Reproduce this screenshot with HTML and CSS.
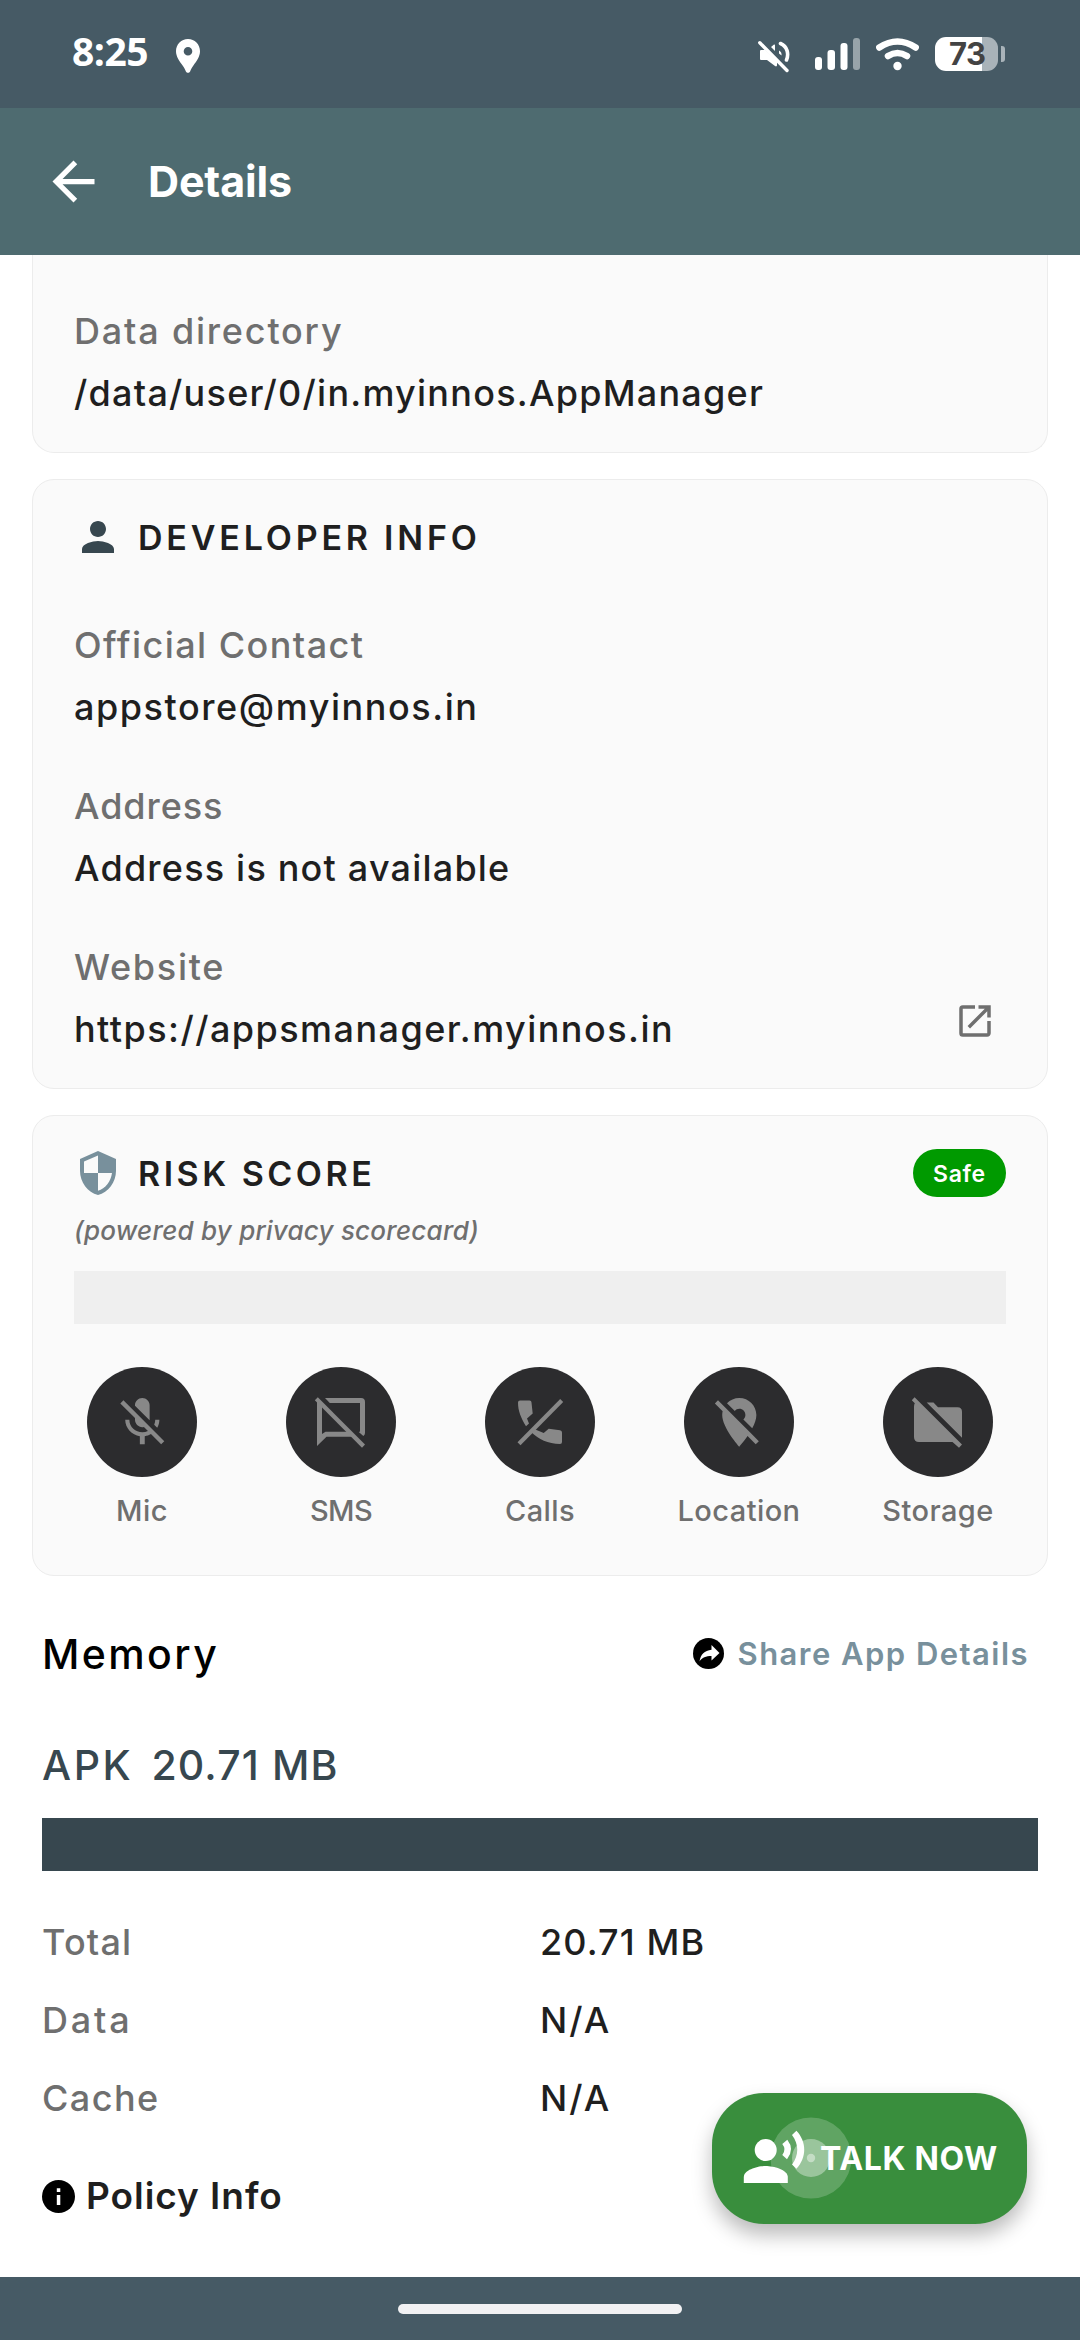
FILE: index.html
```
<!DOCTYPE html>
<html lang="en">
<head>
<meta charset="utf-8">
<title>Details</title>
<link rel="stylesheet" href="styles.css">
</head>
<body>
<div class="screen">
  <div class="status">
    <span class="clock">8:25</span>
    <svg class="pin" width="24" height="34" viewBox="0 0 24 34"><path fill="#fff" fill-rule="evenodd" d="M12 0C5.300 0 0 5.300 0 12.200c0 5.300 3.400 9.800 6.600 14.300 1.500 2.200 2.500 4 3.300 5.900.8 1.800 3.400 1.800 4.200 0 .8-1.900 1.800-3.700 3.300-5.900C20.600 22 24 17.500 24 12.200 24 5.300 18.700 0 12 0zm0 8a4.300 4.300 0 1 1 0 8.600A4.300 4.300 0 0 1 12 8z"/></svg>
    <div class="indicators">
      <svg width="33" height="36" viewBox="0 0 33 36" fill="#fff"><path d="M4 13h4L20 24.500V28c0 1.500-1 1.800-2 1L10 23H4q-1 0-1-1v-8q0-1 1-1z"/><path d="M14 10l3-2.500q1-.5 1 1v5.500zM22 13.500q3 1.500 2.500 5l-2.500-2z"/><path d="M23.500 6.500C30.500 9.500 32 17 29.500 23" fill="none" stroke="#fff" stroke-width="3.600" stroke-linecap="round"/><path d="M2.800 5.800L30 33.500" stroke="#fff" stroke-width="3.400" stroke-linecap="round"/></svg>
      <svg class="signal" width="45" height="36" viewBox="0 0 45 36" fill="#fff"><rect x="0" y="20" width="7" height="13" rx="3"/><rect x="12.500" y="13" width="7.500" height="20" rx="3"/><rect x="25.500" y="6" width="7" height="27" rx="3"/><rect x="38" y="1" width="7" height="32" rx="3" fill="#98a4aa"/></svg>
      <svg class="wifi" width="43" height="36" viewBox="0 0 43 36" fill="none" stroke="#fff" stroke-width="6.500" stroke-linecap="round"><path d="M3.300 10.500Q21.500-1.500 39.700 10.500"/><path d="M12 19Q21.500 13 31 19"/><circle cx="21.500" cy="29" r="4.200" fill="#fff" stroke="none"/></svg>
      <div class="battery"><span class="charge">73</span><span class="nub"></span></div>
    </div>
  </div>

  <div class="appbar">
    <svg width="63" height="63" viewBox="0 0 24 24" fill="#fff"><path d="M20 11H7.830l5.590-5.590L12 4l-8 8 8 8 1.410-1.410L7.830 13H20v-2z"/></svg>
    <span class="title">Details</span>
  </div>

  <div class="content">
    <div class="card card-top">
      <div class="label w-dir">Data directory</div>
      <div class="value w-path">/data/user/0/in.myinnos.AppManager</div>
    </div>

    <div class="card">
      <div class="head">
        <svg width="48" height="48" viewBox="0 0 24 24" fill="#37474f"><path d="M12 12c2.210 0 4-1.790 4-4s-1.790-4-4-4-4 1.790-4 4 1.790 4 4 4zm0 2c-2.670 0-8 1.340-8 4v2h16v-2c0-2.660-5.330-4-8-4z"/></svg>
        <span class="heading w-dev">DEVELOPER INFO</span>
      </div>
      <div class="fields">
        <div class="field"><div class="label">Official Contact</div><div class="value w-mail">appstore@myinnos.in</div></div>
        <div class="field"><div class="label w-addr">Address</div><div class="value w-none">Address is not available</div></div>
        <div class="row">
          <div class="field"><div class="label w-site">Website</div><div class="value w-url">https://appsmanager.myinnos.in</div></div>
          <svg class="open" width="42" height="42" viewBox="0 0 24 24" fill="#6f6f6f"><path d="M19 19H5V5h7V3H5a2 2 0 0 0-2 2v14a2 2 0 0 0 2 2h14c1.100 0 2-.9 2-2v-7h-2v7zM14 3v2h3.590l-9.830 9.830 1.410 1.410L19 6.410V10h2V3h-7z"/></svg>
        </div>
      </div>
    </div>

    <div class="card card-risk">
      <div class="head">
        <svg width="48" height="48" viewBox="0 0 24 24" fill="#78909c"><path d="M12 1L3 5v6c0 5.550 3.840 10.740 9 12 5.160-1.260 9-6.450 9-12V5l-9-4zm0 10.990h7c-.53 4.120-3.280 7.790-7 8.940V12H5V6.300l7-3.110v8.800z"/></svg>
        <span class="heading w-risk">RISK SCORE</span>
        <span class="badge">Safe</span>
      </div>
      <div class="powered">(powered by privacy scorecard)</div>
      <div class="meter"></div>
      <div class="perms">
        <div class="perm"><div class="disc"><svg width="58.600" height="58.600" viewBox="0 0 24 24"><path d="M19 11h-1.700c0 .74-.16 1.430-.43 2.050l1.230 1.230c.56-.98.9-2.090.9-3.280zm-4.020.17c0-.06.02-.11.02-.17V5c0-1.660-1.340-3-3-3S9 3.340 9 5v.18l5.980 5.990zM4.270 3L3 4.270l6.010 6.010V11c0 1.660 1.330 3 2.990 3 .22 0 .44-.03.65-.08l1.660 1.660c-.71.33-1.500.52-2.310.52-2.760 0-5.300-2.100-5.300-5.100H5c0 3.410 2.720 6.230 6 6.720V21h2v-3.280c.91-.13 1.770-.45 2.540-.9L19.730 21 21 19.730 4.270 3z"/></svg></div><span>Mic</span></div>
        <div class="perm"><div class="disc"><svg width="110" height="110" viewBox="0 0 110 110"><path d="M31 33l5 5v29l3.500-2.200H64l5.500 4.900h-29L31 79z"/><path d="M39 31h36q4 0 4 4v31q0 2-1.700 3L72.800 65l1.200-.6V36H43.800z"/><path d="M28.800 33.200l3-3L79 77.500l-3 3.200z"/></svg></div><span class="w-sms">SMS</span></div>
        <div class="perm"><div class="disc"><svg width="110" height="110" viewBox="0 0 110 110"><path d="M35 33.500h9.500q2 0 2 2l1.200 11-5.700 5 2 5-3 2.800C36 51 33 44 33 35.500q0-2 2-2z"/><path d="M47.500 64.700l2.800-2.200 8.400 3.500 5-4.300 11.300 1.600q2 .3 2 2.300V75q0 2-2 2C63 77 53.500 72 46.500 65.500z"/><path d="M32.500 75.200L75.200 32l3 3L35.500 78.200z"/></svg></div><span>Calls</span></div>
        <div class="perm"><div class="disc"><svg width="58.600" height="58.600" viewBox="0 0 24 24"><path d="M12 6.500c1.380 0 2.500 1.120 2.500 2.500 0 .74-.33 1.390-.83 1.850l3.630 3.630c.98-1.860 1.700-3.800 1.700-5.480 0-3.870-3.130-7-7-7-1.980 0-3.760.83-5.040 2.150l3.190 3.190c.46-.52 1.110-.84 1.850-.84zm4.370 9.600l-4.630-4.630-.11-.11L3.270 3 2 4.270l3.180 3.180C5.070 7.950 5 8.470 5 9c0 5.250 7 13 7 13s1.670-1.850 3.380-4.350L18.730 21 20 19.730l-3.630-3.630z"/></svg></div><span>Location</span></div>
        <div class="perm"><div class="disc"><svg width="110" height="110" viewBox="0 0 110 110"><path d="M28.800 33.200l2.800-2.900L79 77.500l-3 3.200-6.500-5.700H36q-5 0-5-5V40q0-2.500.8-3.800z"/><path d="M43.700 35.500h6.800l4.500 4.800h19.500q4.500 0 4.500 4.500v26z"/></svg></div><span>Storage</span></div>
      </div>
    </div>

    <div class="memory">
      <div class="mem-head">
        <span class="big w-mem">Memory</span>
        <div class="share">
          <svg width="31" height="31" viewBox="0 0 31 31"><circle cx="15.500" cy="15.500" r="15.500"/><path fill="#fff" d="M18.500 7L26.500 15 18.500 22.500V18C13 18 9 19.500 6.500 23.500 7.500 16.500 11.500 12.500 18.500 11.800z"/></svg>
          <span>Share App Details</span>
        </div>
      </div>
      <div class="apk"><span class="w-apk">APK</span><span>20.71 MB</span></div>
      <div class="bar"></div>
      <div class="stats">
        <span class="label w-total">Total</span><span class="value w-size">20.71 MB</span>
        <span class="label w-data">Data</span><span class="value w-na">N/A</span>
        <span class="label">Cache</span><span class="value w-na">N/A</span>
      </div>
      <div class="policy">
        <svg width="33" height="33" viewBox="0 0 33 33"><circle cx="16.500" cy="16.500" r="16.500"/><path fill="#fff" d="M14.800 8.200h3.500v3.700h-3.500zM14.800 15h3.500v10h-3.500z"/></svg>
        <span>Policy Info</span>
      </div>
    </div>
  </div>

  <div class="navbar"><div class="handle"></div></div>

  <div class="fab">
    <svg width="315" height="131" viewBox="0 0 315 131" fill="#fff"><circle cx="99" cy="65" r="40.500" fill-opacity=".2"/><circle cx="99" cy="65" r="19" fill-opacity=".37"/><circle cx="99" cy="65" r="4.200" fill-opacity=".42"/><circle cx="53.700" cy="57" r="11"/><path d="M31.800 90v-6c0-7.300 14.600-11 22-11s22 3.700 22 11v6z"/><path d="M70.300 51l5-4.200Q83 56.500 75 66.200l-4.700-4.300Q74.700 56.500 70.300 51zM80 42l4.400-4.300c10.500 11 10.500 27 0 38L80 71.500c7-9.500 7-20 0-29.500z"/></svg>
    <span>TALK NOW</span>
  </div>
</div>
</body>
</html>
```

FILE: styles.css
```
* { box-sizing: border-box; }
body { margin: 0; }
svg { display: block; flex: none; }

.screen {
  position: relative;
  display: flex;
  flex-direction: column;
  width: 1080px;
  height: 2340px;
  overflow: hidden;
  background: #fff;
  font-family: Inter, sans-serif;
  font-weight: 500;
  color: #1f1f1f;
  white-space: nowrap;
}

/* system status bar */
.status {
  flex: none;
  display: flex;
  align-items: flex-start;
  height: 108px;
  padding: 27px 75px 0 72px;
  background: #465a65;
}
.clock {
  width: 104px;
  font: 700 39px/48px "Open Sans", sans-serif;
  letter-spacing: -.5px;
  color: #fff;
}
.pin { margin-top: 12px; }
.indicators {
  display: flex;
  align-items: flex-start;
  margin: 10px 0 0 auto;
}
.signal { margin-left: 25px; }
.wifi { margin: 0 16px; }
.battery { display: flex; align-items: center; gap: 3px; }
.charge {
  width: 63px;
  height: 34px;
  padding-left: 14px;
  border-radius: 11px;
  background: linear-gradient(90deg, #fff 47px, #a9b3b9 47px);
  font-size: 31px;
  font-weight: 700;
  line-height: 34px;
  letter-spacing: -.5px;
  color: #434343;
}
.nub { width: 4px; height: 16px; border-radius: 0 3px 3px 0; background: #a9b3b9; }

.appbar {
  flex: none;
  display: flex;
  align-items: center;
  gap: 43px;
  height: 147px;
  padding-left: 42px;
  background: #4e6b70;
}
.title { padding-bottom: 2px; font-size: 43px; font-weight: 700; line-height: 56px; letter-spacing: -.15px; color: #fff; }

.content { flex: 1; min-height: 0; }
.card {
  margin: 0 32px 26px;
  padding: 33px 41px 37px;
  border: 1px solid #ececec;
  border-radius: 22px;
  background: #fafafa;
}
.card-top {
  padding-top: 54px;
  border-top: 0;
  border-radius: 0 0 22px 22px;
}
.card-risk { height: 461px; margin-bottom: 53px; }

.label, .value { display: block; font-size: 36px; line-height: 44px; letter-spacing: 1.45px; }
.label { color: #6f6f6f; }
.card .value { margin-top: 18px; }
.fields { display: flex; flex-direction: column; gap: 55px; margin-top: 62px; }
.row { display: flex; justify-content: space-between; align-items: flex-end; }
.open { margin: 0 10px 9px 0; }

.head { display: flex; align-items: center; gap: 16px; height: 48px; }
.heading { padding-top: 1px; font-size: 34px; font-weight: 600; line-height: 44px; }
.badge {
  width: 93px;
  height: 48px;
  margin-left: auto;
  padding-top: 1px;
  border-radius: 24px;
  background: #009a00;
  font-size: 23px;
  font-weight: 600;
  line-height: 48px;
  letter-spacing: .65px;
  text-align: center;
  color: #fff;
}
.powered {
  margin-top: 18px;
  font-size: 26px;
  font-style: italic;
  line-height: 32px;
  letter-spacing: .22px;
  color: #6f6f6f;
}
.meter { height: 53px; margin-top: 24px; background: #efefef; }
.perms { display: flex; justify-content: space-between; margin-top: 43px; }
.perm {
  display: flex;
  flex-direction: column;
  align-items: center;
  gap: 16px;
  width: 136px;
  font-size: 29px;
  line-height: 36px;
  letter-spacing: .42px;
  color: #6f6f6f;
}
.disc {
  display: flex;
  align-items: center;
  justify-content: center;
  width: 110px;
  height: 110px;
  border-radius: 50%;
  background: #2c2c2e;
  fill: #888;
}

.memory { padding: 0 42px; }
.mem-head { display: flex; justify-content: space-between; padding-right: 9px; }
.big { font-size: 41px; line-height: 50px; color: #000; }
.share {
  display: flex;
  align-items: center;
  gap: 14px;
  font-size: 31px;
  font-weight: 600;
  line-height: 50px;
  letter-spacing: 1.46px;
  color: #78909c;
}
.share svg { fill: #000; margin-bottom: 2px; }
.apk {
  display: flex;
  gap: 18px;
  margin-top: 61px;
  font-size: 41px;
  line-height: 50px;
  letter-spacing: 1.15px;
  color: #37474f;
}
.bar { height: 53px; margin-top: 28px; background: #37474f; }
.stats { display: grid; grid-template-columns: 1fr 1fr; row-gap: 34px; margin-top: 49px; }
.policy {
  display: flex;
  align-items: center;
  gap: 11px;
  margin-top: 54px;
  font-size: 37px;
  font-weight: 600;
  line-height: 44px;
  letter-spacing: .95px;
}
.policy svg { fill: #000; }

.navbar {
  flex: none;
  display: flex;
  align-items: center;
  justify-content: center;
  height: 63px;
  background: #465a65;
}
.handle { width: 284px; height: 10px; border-radius: 5px; background: #f1f1f3; }

/* floating action button with its touch ripple */
.fab {
  position: absolute;
  left: 712px;
  top: 2093px;
  width: 315px;
  height: 131px;
  border-radius: 52px;
  background: #398e3d;
  box-shadow: 0 11px 20px rgba(0, 0, 0, .27);
  display: grid;
  align-items: center;
}
.fab svg, .fab span { grid-area: 1 / 1; }
.fab span {
  padding-left: 108px;
  font-size: 32px;
  font-weight: 700;
  line-height: 40px;
  letter-spacing: .66px;
  color: #fff;
}

/* tracking per string */
.w-dir { letter-spacing: 1.8px; }
.w-path { letter-spacing: 1.24px; }
.w-dev { letter-spacing: 3.8px; }
.w-mail { letter-spacing: 1.55px; }
.w-addr { letter-spacing: .91px; }
.w-none { letter-spacing: 1.2px; }
.w-site { letter-spacing: 1.7px; }
.w-risk { letter-spacing: 3.5px; }
.w-sms { letter-spacing: -.6px; }
.w-mem { letter-spacing: 2.4px; }
.w-apk { letter-spacing: 2.6px; }
.w-total { letter-spacing: 1.2px; }
.w-size { letter-spacing: 1.1px; }
.w-data { letter-spacing: 2.8px; }
.w-na { letter-spacing: 2.1px; }
```
